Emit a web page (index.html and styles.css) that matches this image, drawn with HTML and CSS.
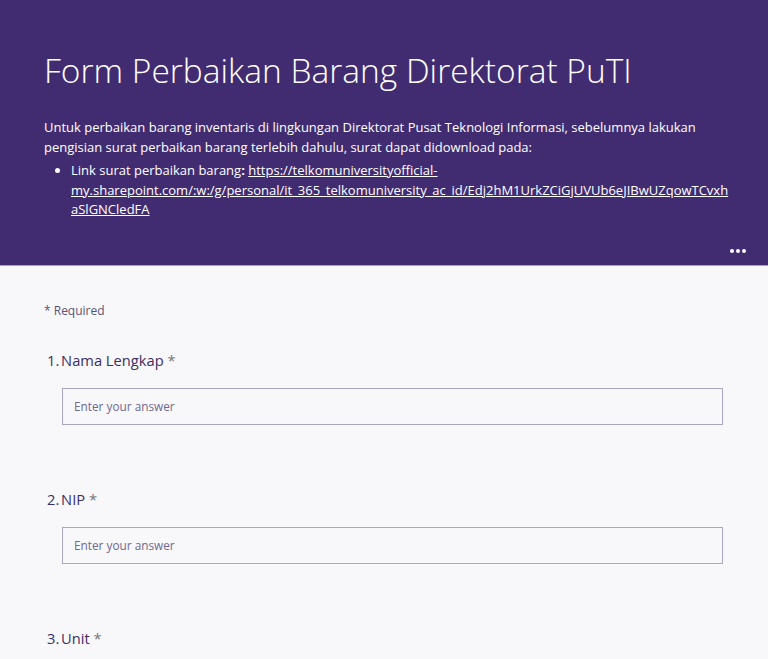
FILE: index.html
```html
<!DOCTYPE html>
<html lang="id">
<head>
    <meta charset="UTF-8">
    <meta name="viewport" content="width=device-width, initial-scale=1.0">
    <title>Form Perbaikan Barang Direktorat PuTI</title>
    <link rel="stylesheet" href="styles.css">
</head>
<body>

<div class="header">
    <h1 class="form-title">Form Perbaikan Barang Direktorat PuTI</h1>
    <div class="form-desc">
        <p>Untuk perbaikan barang inventaris di lingkungan Direktorat Pusat Teknologi Informasi, sebelumnya lakukan pengisian surat perbaikan barang terlebih dahulu, surat dapat didownload pada:</p>
        <ul>
            <li>Link surat perbaikan barang<b>:</b> <a href="#">https://telkomuniversityofficial-my.sharepoint.com/:w:/g/personal/it_365_telkomuniversity_ac_id/Edj2hM1UrkZCiGjUVUb6eJIBwUZqowTCvxhaSlGNCledFA</a></li>
        </ul>
    </div>
    <div class="more"><span></span><span></span><span></span></div>
</div>

<div class="form-body">
    <div class="required-note">* Required</div>

    <div class="question">
        <div class="question-title"><span class="num">1.</span> Nama Lengkap <span class="star">*</span></div>
        <input type="text" class="answer" placeholder="Enter your answer">
    </div>

    <div class="question">
        <div class="question-title"><span class="num">2.</span> NIP <span class="star">*</span></div>
        <input type="text" class="answer" placeholder="Enter your answer">
    </div>

    <div class="question">
        <div class="question-title"><span class="num">3.</span> Unit <span class="star">*</span></div>
    </div>
</div>

</body>
</html>
```

FILE: styles.css
```css
body {
    font-family: "Open Sans", "Noto Sans", sans-serif;
    background-color: #f8f8fb;
    margin: 0;
    padding: 0;
    color: #333;
}
.header {
    position: relative;
    background-color: #422c71;
    color: #fff;
    padding: 48px 30px 45px 44px;
    border-bottom: 1px solid #a79fc4;
}
.form-title {
    margin: 0;
    font-size: 33.5px;
    font-weight: 300;
    line-height: 44px;
}
.form-desc {
    margin-top: 26px;
    font-size: 13px;
    line-height: 19.5px;
    max-width: 690px;
}
.form-desc p {
    margin: 0;
}
.form-desc ul {
    margin: 4px 0 0 0;
    padding-left: 27px;
}
.form-desc a {
    color: #fff;
    overflow-wrap: anywhere;
}
.more {
    position: absolute;
    right: 22px;
    bottom: 12px;
    display: flex;
    gap: 2px;
}
.more span {
    width: 4px;
    height: 4px;
    border-radius: 50%;
    background: #fff;
}
.form-body {
    padding: 36px 44px 0 44px;
}
.required-note {
    font-size: 12px;
    color: #5b5375;
}
.question {
    margin-top: 31px;
    padding-bottom: 33px;
}
.question-title {
    font-size: 14.7px;
    color: #3d2f63;
    margin-left: 3px;
}
.question-title .num {
    margin-right: -2px;
}
.question-title .star {
    color: #777;
}
.answer {
    display: block;
    box-sizing: border-box;
    width: 661px;
    height: 37px;
    margin: 18px 0 0 18px;
    padding: 0 11px;
    border: 1px solid #aaa7c5;
    background: #f8f8fb;
    font-family: inherit;
    font-size: 11.8px;
    color: #333;
}
.answer::placeholder {
    color: #6f6890;
}
```
